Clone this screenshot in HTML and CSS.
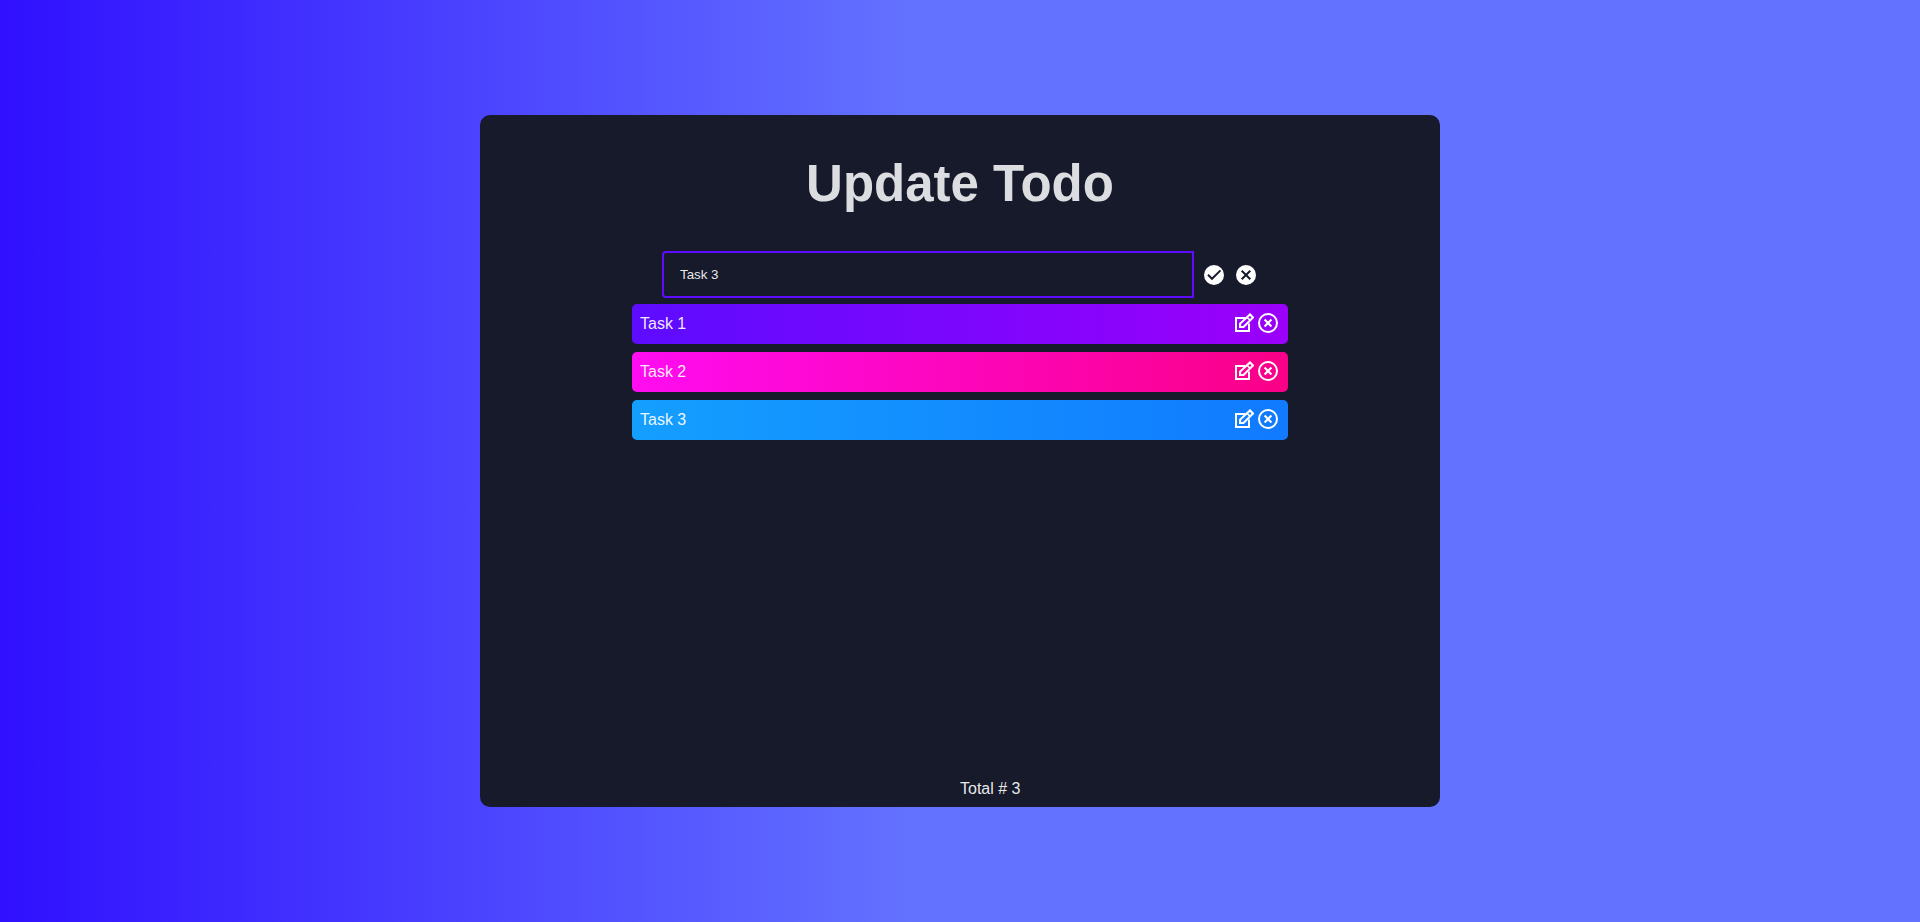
FILE: index.html
```html
<!DOCTYPE html>
<html lang="en">
<head>
<meta charset="utf-8">
<meta name="viewport" content="width=device-width, initial-scale=1">
<title>Update Todo</title>
<link rel="stylesheet" href="styles.css">
</head>
<body>
<svg class="sprite" aria-hidden="true">
  <symbol id="edit" viewBox="0 0 20 20">
    <path d="M11.5 5H2v13h13v-7.5" fill="none" stroke="currentColor" stroke-width="2"/>
    <path d="M6.1 14v-3.4l9.9-9.2 3 3-9.5 9.6z" fill="none" stroke="currentColor" stroke-width="2.1"/>
    <path d="M13 4.2l3.2 3.2" fill="none" stroke="currentColor" stroke-width="1.6"/>
  </symbol>
  <symbol id="remove" viewBox="0 0 20 20">
    <circle cx="10" cy="10" r="9" fill="none" stroke="currentColor" stroke-width="2"/>
    <path d="M6.6 6.6l6.8 6.8m0-6.8l-6.8 6.8" fill="none" stroke="currentColor" stroke-width="2.1"/>
  </symbol>
  <symbol id="confirm" viewBox="0 0 20 20">
    <circle cx="10" cy="10" r="10" fill="currentColor"/>
    <path d="M4 9.8l4 4 8.5-8.4" class="cut"/>
  </symbol>
  <symbol id="cancel" viewBox="0 0 20 20">
    <circle cx="10" cy="10" r="10" fill="currentColor"/>
    <path d="M5.7 5.7l8.6 8.6m0-8.6l-8.6 8.6" class="cut"/>
  </symbol>
</svg>
<main class="card">
  <h1 class="title">Update Todo</h1>
  <form class="form">
    <input class="field" type="text" value="Task 3" aria-label="Task text">
    <button class="icon-button" type="button" aria-label="Confirm"><svg><use href="#confirm"/></svg></button>
    <button class="icon-button" type="button" aria-label="Cancel"><svg><use href="#cancel"/></svg></button>
  </form>
  <ul class="list">
    <li class="task violet"><span class="name">Task 1</span>
      <button class="icon-button" type="button" aria-label="Edit Task 1"><svg><use href="#edit"/></svg></button>
      <button class="icon-button" type="button" aria-label="Delete Task 1"><svg><use href="#remove"/></svg></button></li>
    <li class="task pink"><span class="name">Task 2</span>
      <button class="icon-button" type="button" aria-label="Edit Task 2"><svg><use href="#edit"/></svg></button>
      <button class="icon-button" type="button" aria-label="Delete Task 2"><svg><use href="#remove"/></svg></button></li>
    <li class="task blue"><span class="name">Task 3</span>
      <button class="icon-button" type="button" aria-label="Edit Task 3"><svg><use href="#edit"/></svg></button>
      <button class="icon-button" type="button" aria-label="Delete Task 3"><svg><use href="#remove"/></svg></button></li>
  </ul>
  <p class="total">Total # 3</p>
</main>
</body>
</html>
```

FILE: styles.css
```css
* {
  box-sizing: border-box;
  margin: 0;
  padding: 0;
}

body {
  display: flex;
  align-items: center;
  justify-content: center;
  min-height: 100vh;
  background: linear-gradient(90deg, #3010ff 0%, #6473ff 48%);
  color: rgba(255, 255, 255, 0.92);
  font: 16px/20px "Liberation Sans", Arial, sans-serif;
}

.sprite {
  position: absolute;
  width: 0;
  height: 0;
}

.card {
  display: flex;
  flex-direction: column;
  width: 50%;
  min-height: 75vh;
  padding: 36px 16px 8px;
  border-radius: 10px;
  background: #161a2b;
}

.title {
  margin-bottom: 34px;
  color: #dcdde0;
  font-size: 51px;
  line-height: 66px;
  text-align: center;
}

.form {
  display: flex;
  align-items: center;
  justify-content: center;
  margin-bottom: 6px;
  padding-right: 2px;
}

.field {
  width: 532px;
  height: 47px;
  margin-right: 10px;
  padding: 0 16px;
  border: 2px solid #5d0cff;
  border-radius: 4px 0 0 4px;
  outline: none;
  background: transparent;
  color: inherit;
  font-family: "Liberation Sans", Arial, sans-serif;
}

.icon-button {
  display: flex;
  border: 0;
  background: transparent;
  color: #fff;
  cursor: pointer;
}

.icon-button svg {
  width: 20px;
  height: 20px;
}

.icon-button + .icon-button {
  margin-left: 4px;
}

.form .icon-button + .icon-button {
  margin-left: 12px;
}

.cut {
  fill: none;
  stroke: #161a2b;
  stroke-width: 2;
}

.list {
  display: flex;
  flex-direction: column;
  gap: 8px;
  width: 656px;
  max-width: 100%;
  margin: 0 auto;
  list-style: none;
}

.task {
  display: flex;
  align-items: center;
  min-height: 40px;
  padding: 0 10px 2px 8px;
  border-radius: 5px;
}

.name {
  flex: 1;
  line-height: 22px;
  padding-top: 1px;
}

.violet {
  background: linear-gradient(90deg, #5d0cff 0%, #9b00fa 100%);
}

.pink {
  background: linear-gradient(90deg, #ff0cf1 0%, #fa0087 100%);
}

.blue {
  background: linear-gradient(90deg, #149fff 0%, #117aff 100%);
}

.total {
  margin-top: auto;
  padding-left: 50%;
}
```
